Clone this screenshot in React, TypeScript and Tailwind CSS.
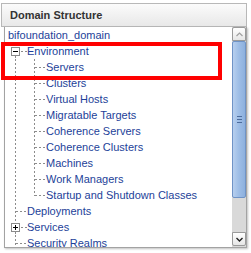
import React from 'react';

type Row = { label: string; kind: 'root' | 'open' | 'closed' | 'leaf' | 'child'; last?: boolean };

const rows: Row[] = [
  { label: 'bifoundation_domain', kind: 'root' },
  { label: 'Environment', kind: 'open' },
  { label: 'Servers', kind: 'child' },
  { label: 'Clusters', kind: 'child' },
  { label: 'Virtual Hosts', kind: 'child' },
  { label: 'Migratable Targets', kind: 'child' },
  { label: 'Coherence Servers', kind: 'child' },
  { label: 'Coherence Clusters', kind: 'child' },
  { label: 'Machines', kind: 'child' },
  { label: 'Work Managers', kind: 'child' },
  { label: 'Startup and Shutdown Classes', kind: 'child', last: true },
  { label: 'Deployments', kind: 'leaf' },
  { label: 'Services', kind: 'closed' },
  { label: 'Security Realms', kind: 'leaf' },
];

const dash = { stroke: '#8c8c8c', strokeWidth: 1, strokeDasharray: '2 2' };

// tree connector drawn per row
const Connector = ({ row }: { row: Row }) => {
  if (row.kind === 'root') return <span className="w-[3px] shrink-0" />;
  if (row.kind === 'child') {
    return (
      <svg width="41" height="16" className="shrink-0">
        <line x1="10.5" y1="0" x2="10.5" y2="16" {...dash} />
        <line x1="29.5" y1="0" x2="29.5" y2={row.last ? 9 : 16} {...dash} />
        <line x1="30" y1="8.5" x2="41" y2="8.5" {...dash} />
      </svg>
    );
  }
  if (row.kind === 'leaf') {
    return (
      <svg width="22" height="16" className="shrink-0">
        <line x1="10.5" y1="0" x2="10.5" y2="16" {...dash} />
        <line x1="11" y1="8.5" x2="22" y2="8.5" {...dash} />
      </svg>
    );
  }
  const open = row.kind === 'open';
  return (
    <svg width="22" height="16" className="shrink-0">
      {!open && <line x1="10.5" y1="0" x2="10.5" y2="4" {...dash} />}
      <line x1="10.5" y1="13" x2="10.5" y2="16" {...dash} />
      <rect x="6.5" y="4.5" width="8" height="8" fill="#fff" stroke="#8a8a8a" />
      <line x1="8" y1="8.5" x2="13" y2="8.5" stroke="#000" />
      {!open && <line x1="10.5" y1="6" x2="10.5" y2="11" stroke="#000" />}
      <line x1="16" y1="8.5" x2="22" y2="8.5" {...dash} />
    </svg>
  );
};

const App: React.FC = () => {
  return (
    <div className="relative w-[251px] h-[253px] overflow-hidden bg-white font-['Liberation_Sans',Arial,sans-serif]">
      <div className="ml-[1px] mt-[3px] w-[246px]">
        {/* header */}
        <div className="h-[24px] flex items-center pl-[8px] border border-[#b8b8b8] bg-gradient-to-b from-[#fbfbfb] to-[#e8e8e8] text-[11px] font-bold text-[#333]">
          Domain Structure
        </div>

        {/* tree body */}
        <div className="ml-[3px] h-[221px] flex border-l border-r border-b border-[#a3a3a3] shadow-[1px_1px_2px_rgba(0,0,0,0.25)]">
          <div className="flex-1 overflow-hidden">
            {rows.map((r) => (
              <div key={r.label} className="flex h-[16px] items-center whitespace-nowrap text-[11px] leading-[16px] text-[#1d3f99]">
                <Connector row={r} />
                <span>{r.label}</span>
              </div>
            ))}
          </div>

          {/* scrollbar */}
          <div className="w-[14px] flex flex-col bg-[#d9d9d9]">
            <div className="h-[14px] flex items-center justify-center border border-[#9a9a9a] rounded-t-[2px] bg-gradient-to-b from-white to-[#e6e6e6]">
              <svg width="7" height="5" viewBox="0 0 7 5">
                <path d="M0.5 4 L3.5 1 L6.5 4" fill="none" stroke="#a0a0a0" strokeWidth="1.2" />
              </svg>
            </div>
            <div className="h-[157px] flex items-center justify-center border border-[#6f93c6] rounded-[2px] bg-gradient-to-r from-[#b7cfee] via-[#9dbde6] to-[#8db0de]">
              <div className="flex flex-col gap-[2px]">
                <div className="w-[5px] h-[1px] bg-[#4d6c9c]" />
                <div className="w-[5px] h-[1px] bg-[#4d6c9c]" />
                <div className="w-[5px] h-[1px] bg-[#4d6c9c]" />
              </div>
            </div>
            <div className="flex-1" />
            <div className="h-[14px] mb-[1px] flex items-center justify-center border border-[#9a9a9a] rounded-b-[2px] bg-gradient-to-b from-white to-[#e6e6e6]">
              <svg width="7" height="5" viewBox="0 0 7 5">
                <path d="M0.5 1 L3.5 4 L6.5 1" fill="none" stroke="#222" strokeWidth="1.4" />
              </svg>
            </div>
          </div>
        </div>
      </div>

      {/* highlight frame */}
      <div className="absolute left-[1px] top-[42px] w-[221px] h-[38px] border-[4px] border-[#ff0000]" />
    </div>
  );
};

export default App;
